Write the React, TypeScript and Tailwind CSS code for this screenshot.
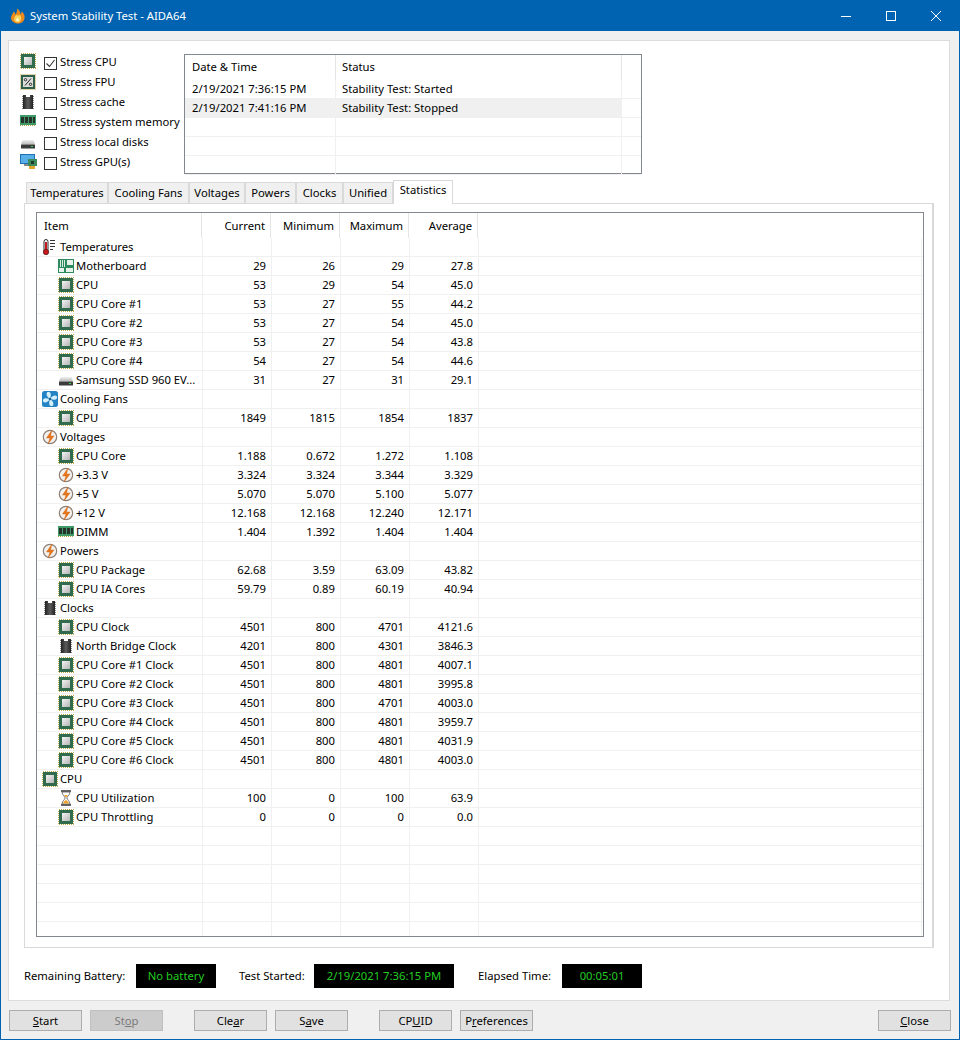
const font = "font-['Noto_Sans','Liberation_Sans',sans-serif]";

function ChipIcon() {
  return (
    <svg width="16" height="16" viewBox="0 0 16 16" shapeRendering="crispEdges" className="shrink-0">
      <defs>
        <linearGradient id="chipFill" x1="0" y1="0" x2="1" y2="1">
          <stop offset="0" stopColor="#f4f4f4" />
          <stop offset="1" stopColor="#b4b4b4" />
        </linearGradient>
      </defs>
      <rect x="0.5" y="0.5" width="15" height="15" fill="none" stroke="#c4ab52" strokeDasharray="1 1" />
      <rect x="1" y="1" width="14" height="14" fill="#2f6b4c" />
      <rect x="4" y="4" width="8" height="8" fill="url(#chipFill)" />
    </svg>
  );
}

function FpuIcon() {
  return (
    <svg width="16" height="16" viewBox="0 0 16 16" className="shrink-0">
      <rect x="0.5" y="0.5" width="15" height="15" fill="none" stroke="#c4ab52" strokeDasharray="1 1" />
      <rect x="1" y="1" width="14" height="14" fill="#2f5f48" />
      <rect x="3" y="3" width="10" height="10" fill="#dcdcdc" />
      <circle cx="5.5" cy="5.7" r="1.2" fill="none" stroke="#222" strokeWidth="0.9" />
      <circle cx="10.5" cy="10.3" r="1.2" fill="none" stroke="#222" strokeWidth="0.9" />
      <path d="M11 4.5 5 11.5" stroke="#222" strokeWidth="1" />
    </svg>
  );
}

function MemChipIcon() {
  return (
    <svg width="16" height="16" viewBox="0 0 16 16" shapeRendering="crispEdges" className="shrink-0">
      <defs>
        <linearGradient id="memFill" x1="0" y1="0" x2="1" y2="0">
          <stop offset="0" stopColor="#222" />
          <stop offset="0.5" stopColor="#5c5c5c" />
          <stop offset="1" stopColor="#222" />
        </linearGradient>
      </defs>
      <path d="M3 1h3v2h4V1h3v14H3z" fill="url(#memFill)" />
      <path d="M2 2h1M2 4h1M2 6h1M2 8h1M2 10h1M2 12h1M2 14h1M13 2h1M13 4h1M13 6h1M13 8h1M13 10h1M13 12h1M13 14h1" stroke="#888" />
    </svg>
  );
}

function DimmIcon() {
  return (
    <svg width="16" height="16" viewBox="0 0 16 16" shapeRendering="crispEdges" className="shrink-0">
      <rect x="0" y="2" width="16" height="10" fill="#3f9a68" />
      <rect x="1" y="4" width="3" height="6" fill="#26332c" />
      <rect x="5" y="4" width="3" height="6" fill="#26332c" />
      <rect x="9" y="4" width="3" height="6" fill="#26332c" />
      <rect x="13" y="4" width="2" height="6" fill="#26332c" />
      <path d="M0 12.5h16" stroke="#b9a24a" strokeDasharray="1 1" />
    </svg>
  );
}

function DiskIcon() {
  return (
    <svg width="16" height="16" viewBox="0 0 16 16" className="shrink-0">
      <defs>
        <linearGradient id="diskTop" x1="0" y1="0" x2="0" y2="1">
          <stop offset="0" stopColor="#f0f0f0" />
          <stop offset="1" stopColor="#b8b8b8" />
        </linearGradient>
      </defs>
      <path d="M2.5 5h11L15 9.500H1z" fill="url(#diskTop)" />
      <rect x="1" y="9.500" width="14" height="4" rx="0.500" fill="#3b3b3b" />
      <rect x="11" y="11" width="2" height="1" fill="#35d04a" />
    </svg>
  );
}

function GpuIcon() {
  return (
    <svg width="17" height="16" viewBox="0 0 17 16" shapeRendering="crispEdges" className="shrink-0">
      <rect x="0" y="0" width="15" height="10" fill="#1e6fb4" />
      <rect x="1" y="1" width="13" height="8" fill="#58aee6" />
      <rect x="4" y="10" width="4" height="2" fill="#8a8a8a" />
      <rect x="8" y="5" width="9" height="7" fill="#3c8a5c" />
      <rect x="11" y="7" width="3" height="3" fill="#1d3b2b" />
      <rect x="9" y="12" width="6" height="3" fill="#e2a52c" />
    </svg>
  );
}

function ThermoIcon() {
  return (
    <svg width="16" height="16" viewBox="0 0 16 16" className="shrink-0">
      <rect x="2" y="0.500" width="4" height="12" rx="2" fill="#fff" stroke="#2a2a2a" />
      <rect x="3" y="3" width="2" height="9" fill="#c8191c" />
      <circle cx="4" cy="13" r="2.700" fill="#c8191c" stroke="#4c1012" strokeWidth="0.700" />
      <path d="M8 1.500h5M8 4.500h5M8 7.500h5M8 10.500h3" stroke="#333" strokeWidth="1" />
    </svg>
  );
}

function BoardIcon() {
  return (
    <svg width="16" height="16" viewBox="0 0 16 16" shapeRendering="crispEdges" className="shrink-0">
      <rect x="0" y="1" width="16" height="14" fill="#2d8a5c" />
      <rect x="2" y="2" width="1" height="7" fill="#d9ecdf" />
      <rect x="4" y="2" width="1" height="7" fill="#d9ecdf" />
      <rect x="6" y="2" width="1" height="7" fill="#d9ecdf" />
      <rect x="9" y="2" width="6" height="5" fill="#e6f2ea" />
      <rect x="1" y="10" width="5" height="4" fill="#e6f2ea" />
      <rect x="8" y="10" width="7" height="4" fill="#e6f2ea" />
    </svg>
  );
}

function FanIcon() {
  return (
    <svg width="16" height="16" viewBox="0 0 16 16" className="shrink-0">
      <rect x="0" y="0" width="16" height="16" rx="2.500" fill="#2383c4" />
      <g fill="#d6f0fb">
        <path d="M8 8C5 6 3.500 3 5.500 1c2.500-.5 4.500 1 2.500 7z" />
        <path d="M8 8C10 5 13 3.500 15 5.500c.5 2.500-1 4.500-7 2.500z" />
        <path d="M8 8c3 2 4.500 5 2.500 7-2.500.5-4.500-1-2.500-7z" />
        <path d="M8 8C6 11 3 12.500 1 10.500.5 8 2 6 8 8z" />
      </g>
      <circle cx="8" cy="8" r="1.300" fill="#1a5f90" />
    </svg>
  );
}

function BoltIcon() {
  return (
    <svg width="16" height="16" viewBox="0 0 16 16" className="shrink-0">
      <circle cx="8" cy="8" r="6.700" fill="#f3f1ee" stroke="#8f8078" strokeWidth="1.200" />
      <path d="M10 1 4.500 9H8l-2 6 6-8H8.500z" fill="#e8761a" stroke="#c75b0c" strokeWidth="0.400" />
    </svg>
  );
}

function HourglassIcon() {
  return (
    <svg width="16" height="16" viewBox="0 0 16 16" className="shrink-0">
      <path d="M3 1h10M3 15h10" stroke="#333" strokeWidth="1.300" />
      <path d="M4 2h8c0 3-3 4.500-3.200 6C9 9.500 12 11 12 14H4c0-3 3-4.500 3.200-6C7 6.500 4 5 4 2z" fill="#fff" stroke="#555" strokeWidth="0.800" />
      <path d="M5 13.500c.5-2 2-3 3-3.500 1 .5 2.500 1.500 3 3.500zM6 5h4l-2 2.500z" fill="#eda22c" />
    </svg>
  );
}

function FlameIcon() {
  return (
    <svg width="16" height="16" viewBox="0 0 16 16" className="shrink-0">
      <path d="M1 10c0-3 2-4 2.500-6.500C5 4.500 5.500 6 5.500 7 6.500 5 7.500 3 7 .500c2.500 1.500 3.500 4 3.500 6 .7-.8 1.200-2 1.200-3.200C14 5.500 15 8 14.500 10.500 14 13.500 11 15.500 8 15.500S1 13.500 1 10z" fill="#ee8a1c" />
      <path d="M4 11c0-2 1.500-3 2.500-4.500C7 8 9 8 9.500 6.500c1.500 1.500 2 3 1.500 5-.5 2-2 3-3.500 3S4 13 4 11z" fill="#fbd25a" />
      <path d="M6 12c0-1 1-1.500 1.500-2.500.5 1 2 1.500 1.500 3-.3 1-3 1-3-.5z" fill="#fff5c8" />
    </svg>
  );
}

type Row = { icon: React.ReactNode; name: string; group?: boolean; vals?: string[] };

const chip = <ChipIcon />;
const bolt = <BoltIcon />;
const mem = <MemChipIcon />;

const rows: Row[] = [
  { icon: <ThermoIcon />, name: "Temperatures", group: true },
  { icon: <BoardIcon />, name: "Motherboard", vals: ["29", "26", "29", "27.8"] },
  { icon: chip, name: "CPU", vals: ["53", "29", "54", "45.0"] },
  { icon: chip, name: "CPU Core #1", vals: ["53", "27", "55", "44.2"] },
  { icon: chip, name: "CPU Core #2", vals: ["53", "27", "54", "45.0"] },
  { icon: chip, name: "CPU Core #3", vals: ["53", "27", "54", "43.8"] },
  { icon: chip, name: "CPU Core #4", vals: ["54", "27", "54", "44.6"] },
  { icon: <DiskIcon />, name: "Samsung SSD 960 EV...", vals: ["31", "27", "31", "29.1"] },
  { icon: <FanIcon />, name: "Cooling Fans", group: true },
  { icon: chip, name: "CPU", vals: ["1849", "1815", "1854", "1837"] },
  { icon: bolt, name: "Voltages", group: true },
  { icon: chip, name: "CPU Core", vals: ["1.188", "0.672", "1.272", "1.108"] },
  { icon: bolt, name: "+3.3 V", vals: ["3.324", "3.324", "3.344", "3.329"] },
  { icon: bolt, name: "+5 V", vals: ["5.070", "5.070", "5.100", "5.077"] },
  { icon: bolt, name: "+12 V", vals: ["12.168", "12.168", "12.240", "12.171"] },
  { icon: <DimmIcon />, name: "DIMM", vals: ["1.404", "1.392", "1.404", "1.404"] },
  { icon: bolt, name: "Powers", group: true },
  { icon: chip, name: "CPU Package", vals: ["62.68", "3.59", "63.09", "43.82"] },
  { icon: chip, name: "CPU IA Cores", vals: ["59.79", "0.89", "60.19", "40.94"] },
  { icon: mem, name: "Clocks", group: true },
  { icon: chip, name: "CPU Clock", vals: ["4501", "800", "4701", "4121.6"] },
  { icon: mem, name: "North Bridge Clock", vals: ["4201", "800", "4301", "3846.3"] },
  { icon: chip, name: "CPU Core #1 Clock", vals: ["4501", "800", "4801", "4007.1"] },
  { icon: chip, name: "CPU Core #2 Clock", vals: ["4501", "800", "4801", "3995.8"] },
  { icon: chip, name: "CPU Core #3 Clock", vals: ["4501", "800", "4701", "4003.0"] },
  { icon: chip, name: "CPU Core #4 Clock", vals: ["4501", "800", "4801", "3959.7"] },
  { icon: chip, name: "CPU Core #5 Clock", vals: ["4501", "800", "4801", "4031.9"] },
  { icon: chip, name: "CPU Core #6 Clock", vals: ["4501", "800", "4801", "4003.0"] },
  { icon: chip, name: "CPU", group: true },
  { icon: <HourglassIcon />, name: "CPU Utilization", vals: ["100", "0", "100", "63.9"] },
  { icon: chip, name: "CPU Throttling", vals: ["0", "0", "0", "0.0"] },
];

const stress = [
  { icon: <ChipIcon />, label: "Stress CPU", checked: true, lift: "mb-[4px]" },
  { icon: <FpuIcon />, label: "Stress FPU", lift: "mb-[3px]" },
  { icon: <MemChipIcon />, label: "Stress cache", lift: "mb-[3px]" },
  { icon: <DimmIcon />, label: "Stress system memory", lift: "mb-[4px]" },
  { icon: <DiskIcon />, label: "Stress local disks", lift: "" },
  { icon: <GpuIcon />, label: "Stress GPU(s)", lift: "mb-[2px]" },
];

const tabs = [
  { label: "Temperatures", w: "w-[82px]" },
  { label: "Cooling Fans", w: "w-[81px]" },
  { label: "Voltages", w: "w-[56px]" },
  { label: "Powers", w: "w-[51px]" },
  { label: "Clocks", w: "w-[47px]" },
  { label: "Unified", w: "w-[50px]" },
];

function Btn({ pre, u, post, w = "w-[73px]", disabled }: { pre?: string; u: string; post?: string; w?: string; disabled?: boolean }) {
  return (
    <div
      className={`${w} h-[21px] flex items-center justify-center border ${
        disabled ? "bg-[#cccccc] border-[#bfbfbf] text-[#7a7a7a]" : "bg-[#e1e1e1] border-[#adadad] text-black"
      }`}
    >
      <span>
        {pre}
        <span className="underline">{u}</span>
        {post}
      </span>
    </div>
  );
}

function Readout({ text, w }: { text: string; w: string }) {
  return <div className={`${w} h-[24px] bg-black text-[#22cc22] flex items-center justify-center`}>{text}</div>;
}

function LogRow({ date, status, selected }: { date?: string; status?: string; selected?: boolean }) {
  return (
    <div className="flex h-[19px] border-b border-[#f0f0f0]">
      <div className={`w-[151px] border-r border-[#f0f0f0] pl-[7px] flex items-center ${selected ? "bg-[#f0f0f0]" : ""}`}>{date}</div>
      <div className={`w-[286px] border-r border-[#f0f0f0] pl-[6px] flex items-center ${selected ? "bg-[#f0f0f0]" : ""}`}>{status}</div>
    </div>
  );
}

export default function App() {
  return (
    <div className={`${font} w-[960px] h-[1040px] flex flex-col bg-[#f0f0f0] border-x border-b border-[#0063b1] text-[11.25px] leading-[16px] whitespace-nowrap text-black overflow-hidden`}>
      {/* Title bar */}
      <div className="h-[31px] -mx-px bg-[#0063b1] text-white flex items-center shrink-0">
        <div className="ml-[10px] mr-[4px]">
          <FlameIcon />
        </div>
        <span className="flex-1">System Stability Test - AIDA64</span>
        <div className="w-[45px] flex justify-center">
          <svg width="10" height="10" viewBox="0 0 10 10"><path d="M0 5.500h10" stroke="#fff" /></svg>
        </div>
        <div className="w-[45px] flex justify-center">
          <svg width="10" height="10" viewBox="0 0 10 10"><rect x="0.500" y="0.500" width="9" height="9" fill="none" stroke="#fff" /></svg>
        </div>
        <div className="w-[45px] mr-[2px] flex justify-center">
          <svg width="10" height="10" viewBox="0 0 10 10"><path d="M0 0l10 10M10 0 0 10" stroke="#fff" /></svg>
        </div>
      </div>

      {/* Main panel */}
      <div className="ml-[7px] mt-[9px] w-[942px] h-[961px] shrink-0 bg-white border border-[#dcdcdc] flex flex-col">
        <div className="flex pt-[12px] pl-[11px] h-[133px] shrink-0">
          <div className="w-[164px] shrink-0">
            {stress.map((s) => (
              <div key={s.label} className="flex items-center h-[20px]">
                <div className={`w-[24px] ${s.lift}`}>{s.icon}</div>
                <div className="w-[13px] h-[13px] border border-[#333] flex items-center justify-center mr-[3px]">
                  {s.checked && (
                    <svg width="11" height="11" viewBox="0 0 11 11"><path d="M1.500 5.500l3 3 5-6.500" fill="none" stroke="#333" strokeWidth="1.100" /></svg>
                  )}
                </div>
                <span className="mb-[2px]">{s.label}</span>
              </div>
            ))}
          </div>
          <div className="mt-px w-[458px] h-[120px] border border-[#828790]">
            <div className="flex h-[25px]">
              <div className="w-[151px] border-r border-[#e5e5e5] pl-[7px] pb-[2px] flex items-center">Date &amp; Time</div>
              <div className="w-[286px] border-r border-[#e5e5e5] pl-[6px] pb-[2px] flex items-center">Status</div>
            </div>
            <LogRow date="2/19/2021 7:36:15 PM" status="Stability Test: Started" />
            <LogRow date="2/19/2021 7:41:16 PM" status="Stability Test: Stopped" selected />
            <LogRow />
            <LogRow />
            <LogRow />
          </div>
        </div>

        {/* Tabs */}
        <div className="flex items-end h-[29px] pl-[17px] shrink-0">
          {tabs.map((t) => (
            <div key={t.label} className={`${t.w} h-[21px] bg-[#f0f0f0] border border-b-0 border-[#d9d9d9] flex items-center justify-center`}>
              {t.label}
            </div>
          ))}
          <div className="w-[60px] h-[24px] bg-white border border-b-0 border-[#d9d9d9] flex items-start pt-[1px] justify-center relative top-px z-10">Statistics</div>
        </div>

        {/* Statistics panel */}
        <div className="ml-[15px] w-[910px] h-[745px] border border-[#d9d9d9] border-r-2 shrink-0 pt-[8px] pl-[11px]">
          <div className="w-[888px] h-[725px] border border-[#828790] overflow-hidden">
            <div className="flex h-[25px]">
              <div className="w-[165px] border-r border-[#e5e5e5] pl-[7px] flex items-center">Item</div>
              {["Current", "Minimum", "Maximum", "Average"].map((h) => (
                <div key={h} className="w-[69px] border-r border-[#e5e5e5] pr-[5px] flex items-center justify-end">{h}</div>
              ))}
            </div>
            {rows.map((r, i) => (
              <div key={i} className="flex h-[19px] border-b border-[#f0f0f0]">
                <div className={`w-[166px] border-r border-[#f0f0f0] flex items-center ${r.group ? "pl-[5px]" : "pl-[21px]"}`}>
                  {r.icon}
                  <span className="ml-[2px]">{r.name}</span>
                </div>
                {[0, 1, 2, 3].map((c) => (
                  <div key={c} className="w-[69px] border-r border-[#f0f0f0] pr-[5px] flex items-center justify-end">{r.vals?.[c]}</div>
                ))}
                <div className="w-[443px] border-r border-[#f0f0f0]" />
              </div>
            ))}
            {[0, 1, 2, 3, 4, 5].map((i) => (
              <div key={i} className="flex h-[19px] border-b border-[#f0f0f0]">
                <div className="w-[166px] border-r border-[#f0f0f0]" />
                <div className="w-[69px] border-r border-[#f0f0f0]" />
                <div className="w-[69px] border-r border-[#f0f0f0]" />
                <div className="w-[69px] border-r border-[#f0f0f0]" />
                <div className="w-[69px] border-r border-[#f0f0f0]" />
                <div className="w-[443px] border-r border-[#f0f0f0]" />
              </div>
            ))}
          </div>
        </div>

        {/* Status line */}
        <div className="flex items-center mt-[16px] pl-[15px] h-[24px] shrink-0">
          <span className="w-[112px]">Remaining Battery:</span>
          <Readout text="No battery" w="w-[80px]" />
          <span className="ml-[23px] w-[75px]">Test Started:</span>
          <Readout text="2/19/2021 7:36:15 PM" w="w-[140px]" />
          <span className="ml-[24px] w-[84px]">Elapsed Time:</span>
          <Readout text="00:05:01" w="w-[80px]" />
        </div>
      </div>

      {/* Buttons */}
      <div className="flex mt-[9px] pl-[8px]">
        <Btn u="S" post="tart" />
        <div className="ml-[8px]"><Btn pre="St" u="o" post="p" disabled /></div>
        <div className="ml-[31px]"><Btn pre="Cle" u="a" post="r" /></div>
        <div className="ml-[8px]"><Btn pre="S" u="a" post="ve" /></div>
        <div className="ml-[31px]"><Btn pre="CP" u="U" post="ID" /></div>
        <div className="ml-[8px]"><Btn pre="P" u="r" post="eferences" /></div>
        <div className="ml-[345px]"><Btn u="C" post="lose" /></div>
      </div>
    </div>
  );
}
